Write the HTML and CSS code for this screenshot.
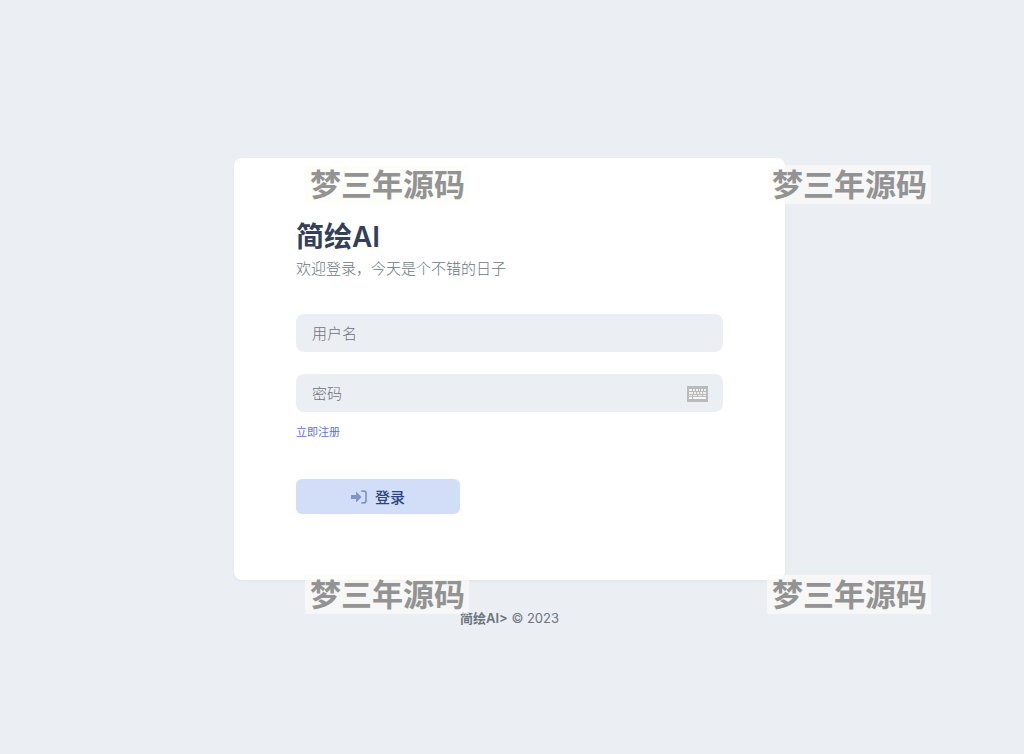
FILE: index.html
```html
<!DOCTYPE html>
<html lang="zh-CN">
<head>
    <meta charset="UTF-8">
    <meta name="viewport" content="width=device-width, initial-scale=1.0">
    <title>简绘AI</title>
    <link rel="stylesheet" href="styles.css">
</head>
<body>
    <main class="page">
        <div class="card">
            <h1 class="title">简绘AI</h1>
            <p class="subtitle">欢迎登录，今天是个不错的日子</p>
            <form class="login-form">
                <input type="text" class="form-control" name="username" placeholder="用户名" aria-label="用户名">
                <div class="password-box">
                    <input type="password" class="form-control" name="password" placeholder="密码" aria-label="密码">
                    <button type="button" class="keyboard-btn" aria-label="键盘">
                        <svg width="21" height="16" viewBox="0 0 21 16">
                            <rect width="21" height="16" fill="#b9babb"/>
                            <path fill="#eeeff0" d="M2 3h3v2H2zM6 3h2v2H6zM9 3h2v2H9zM12 3h1v2h-1zM14 3h2v2h-2zM17 3h2v2h-2zM2 6h4v2H2zM7 6h2v2H7zM10 6h2v2h-2zM13 6h2v2h-2zM16 6h3v2h-3zM2 9h3v1H2zM6 9h4v1H6zM11 9h4v1h-4zM16 9h3v1h-3z"/>
                            <path fill="#fafafa" d="M2 11h3v2H2zM6 11h13v2H6z"/>
                        </svg>
                    </button>
                </div>
                <a href="#" class="register-link">立即注册</a>
                <button type="submit" class="login-btn">
                    <svg width="16" height="14" viewBox="0 0 16 14">
                        <path fill="#8095c6" d="M0 5.5Q0 5 .6 5H5V2.6q0-1 .8-.4l4.3 4.2q.6.6 0 1.2l-4.3 4.2q-.8.6-.8-.4V9H.6Q0 9 0 8.5z"/>
                        <path fill="none" stroke="#8095c6" stroke-width="1.7" stroke-linecap="round" d="M11 1.2h2q2 0 2 2v7.6q0 2-2 2h-2"/>
                    </svg>
                    <span>登录</span>
                </button>
            </form>
        </div>
        <footer class="footer"><strong>简绘AI&gt;</strong> © 2023</footer>
    </main>
    <div class="watermark top left">梦三年源码</div>
    <div class="watermark top right">梦三年源码</div>
    <div class="watermark bottom left">梦三年源码</div>
    <div class="watermark bottom right">梦三年源码</div>
</body>
</html>
```
FILE: styles.css
```css
* {
    box-sizing: border-box;
}
body {
    margin: 0;
    background-color: #ebeef3;
    color: #6c757d;
    font-family: Inter, "Noto Sans CJK SC", sans-serif;
    font-size: 15px;
}
.page {
    display: flex;
    flex-direction: column;
    align-items: center;
    min-height: 100vh;
    padding: 158px 21px 20px 16px;
}
.card {
    width: 100%;
    max-width: 551px;
    padding: 62px 62px 66px;
    background-color: #ffffff;
    border-radius: 8px;
    box-shadow: 0 1px 3px rgba(50, 60, 80, 0.06);
}
.title {
    margin: 0;
    color: #334058;
    font-size: 28px;
    font-weight: 600;
    line-height: 34px;
}
.subtitle {
    margin: 4px 0 34px;
    font-weight: 300;
    line-height: 22px;
}
.login-form {
    display: flex;
    flex-direction: column;
    align-items: flex-start;
}
.form-control {
    display: block;
    width: 100%;
    height: 38px;
    padding: 0 16px;
    border: none;
    border-radius: 8px;
    background-color: #ebeef3;
    color: #334058;
    font-family: inherit;
    font-size: 15px;
    font-weight: 300;
    outline: none;
}
.form-control::placeholder {
    color: #6c7278;
}
.password-box {
    position: relative;
    width: 100%;
    margin-top: 22px;
}
.keyboard-btn {
    position: absolute;
    top: 12px;
    right: 15px;
    padding: 0;
    border: none;
    background: none;
    cursor: pointer;
}
.keyboard-btn svg {
    display: block;
}
.register-link {
    margin-top: 12px;
    color: #5b72dc;
    font-size: 11px;
    line-height: 16px;
    text-decoration: none;
}
.login-btn {
    display: flex;
    align-items: center;
    justify-content: center;
    gap: 8px;
    width: 164px;
    height: 35px;
    margin-top: 39px;
    border: none;
    border-radius: 6px;
    background-color: #d2ddf8;
    color: #2b4582;
    font-family: inherit;
    font-size: 15px;
    font-weight: 500;
    cursor: pointer;
}
.footer {
    margin-top: 28px;
    font-size: 13px;
    line-height: 20px;
}
.footer strong {
    font-weight: 600;
}

/* watermarks lie over the whole page */
.watermark {
    position: absolute;
    padding: 0 4px 0 5px;
    background-color: rgba(252, 252, 248, 0.65);
    color: #929392;
    font-size: 31px;
    font-weight: 700;
    line-height: 39px;
    pointer-events: none;
}
.watermark.top {
    top: 165px;
}
.watermark.bottom {
    top: 575px;
}
.watermark.left {
    left: 305px;
}
.watermark.right {
    left: 767px;
}
```
